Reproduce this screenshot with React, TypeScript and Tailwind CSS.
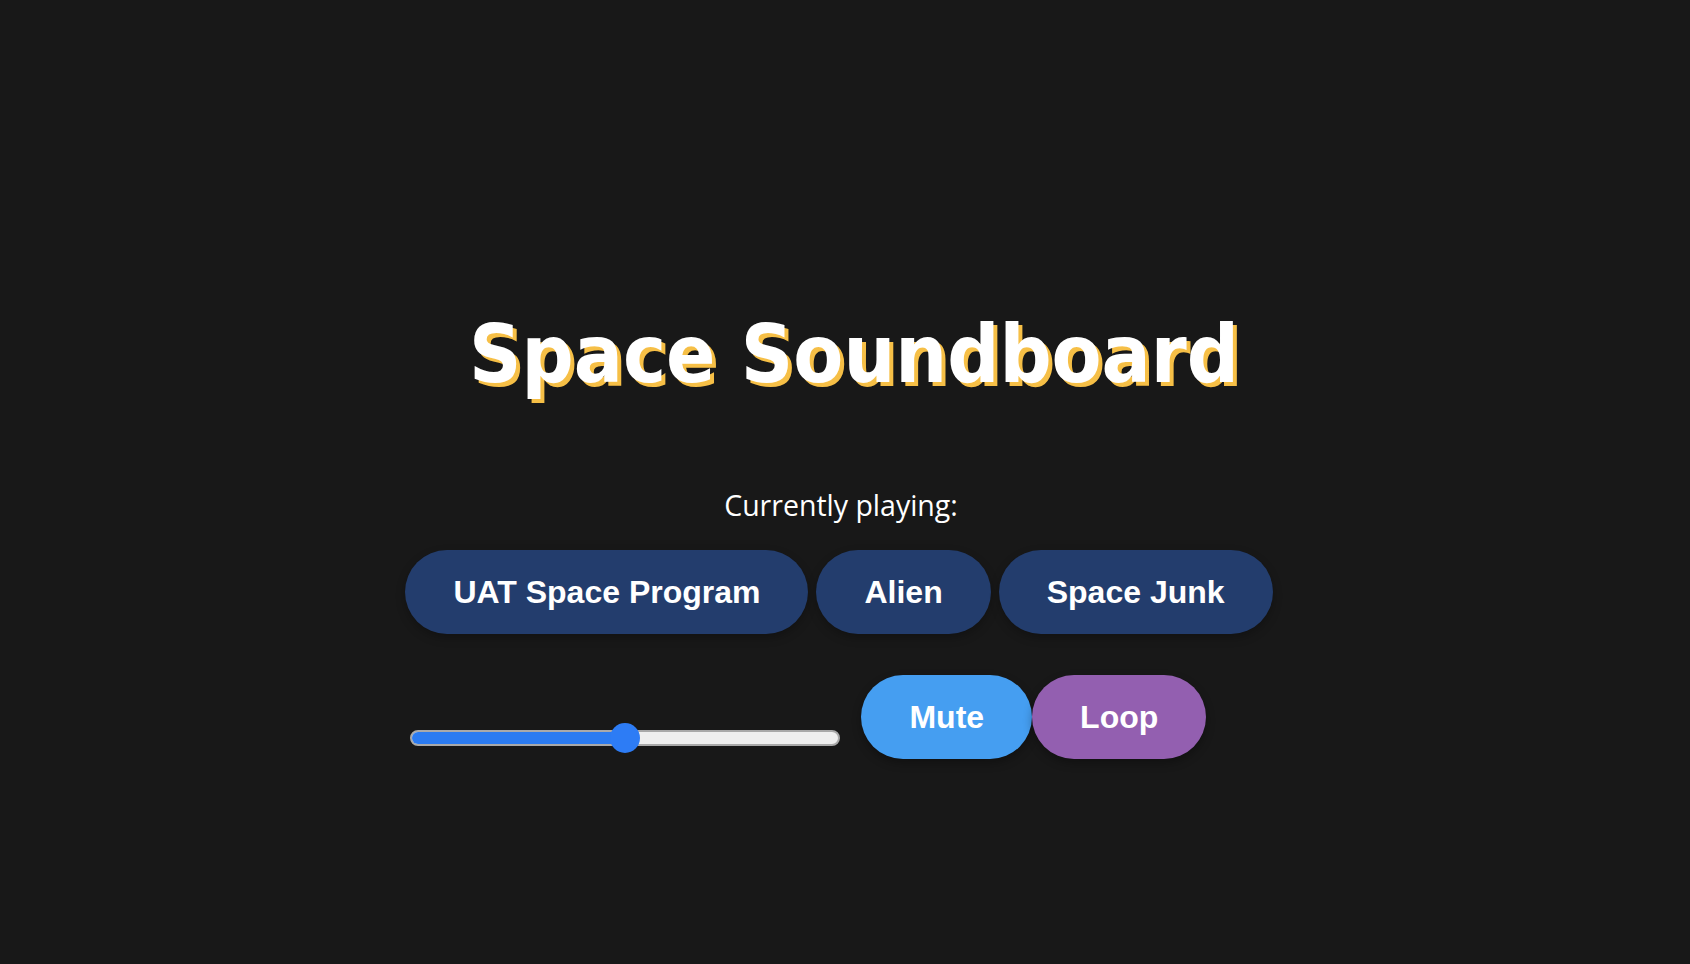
import { useState } from 'react';

const tracks = ['UAT Space Program', 'Alien', 'Space Junk'];

const Slider = ({ value }: { value: number }) => {
  return (
    <div className="relative w-[430px] h-[30px] flex items-center">
      <div className="w-full h-[16px] rounded-full bg-[#efefef] border-2 border-[#a9a9a9] overflow-hidden">
        <div className="h-full bg-[#2b7bf1]" style={{ width: `${value}%` }} />
      </div>
      <div
        className="absolute top-0 w-[30px] h-[30px] rounded-full bg-[#2d7cf5] -translate-x-1/2"
        style={{ left: `${value}%` }}
      />
    </div>
  );
};

export default function App() {
  const [current, setCurrent] = useState<string | null>(null);
  const [muted, setMuted] = useState(false);
  const [loop, setLoop] = useState(false);

  return (
    <div className="min-h-screen w-full bg-[#181818] flex flex-col items-center pt-[306px]">
      <h1 className="font-['DejaVu_Sans_Condensed','DejaVu_Sans',sans-serif] [font-stretch:condensed] font-bold text-[81px] leading-[1.2] text-white [text-shadow:4px_4px_0_#f6bf46] pl-[18px]">
        Space Soundboard
      </h1>

      <p className="mt-[81px] font-['Open_Sans',sans-serif] text-[28.5px] leading-[42px] text-white pr-[8px]">
        Currently playing:{current ? ` ${current}` : ''}
      </p>

      <div className="mt-6 flex flex-col items-start">
        <div className="flex gap-2 pr-3">
          {tracks.map((t) => (
            <button
              key={t}
              onClick={() => setCurrent(t)}
              className="px-12 py-6 rounded-full bg-[#233d6d] text-white font-['Liberation_Sans',Arial,sans-serif] font-bold text-[32px] leading-[36px] shadow-[0_4px_10px_rgba(0,0,0,0.25)]"
            >
              {t}
            </button>
          ))}
        </div>

        <div className="mt-[41px] flex items-end pl-[5px]">
          <div className="mb-[6px]">
            <Slider value={50} />
          </div>
          <button
            onClick={() => setMuted(!muted)}
            className="ml-[21px] px-12 py-6 rounded-full bg-[#459ef1] text-white font-['Liberation_Sans',Arial,sans-serif] font-bold text-[32px] leading-[36px] shadow-[0_4px_10px_rgba(0,0,0,0.3)]"
          >
            Mute
          </button>
          <button
            onClick={() => setLoop(!loop)}
            className="px-12 py-6 rounded-full bg-[#935fb0] text-white font-['Liberation_Sans',Arial,sans-serif] font-bold text-[32px] leading-[36px] shadow-[0_4px_10px_rgba(0,0,0,0.3)]"
          >
            Loop
          </button>
        </div>
      </div>
    </div>
  );
}
